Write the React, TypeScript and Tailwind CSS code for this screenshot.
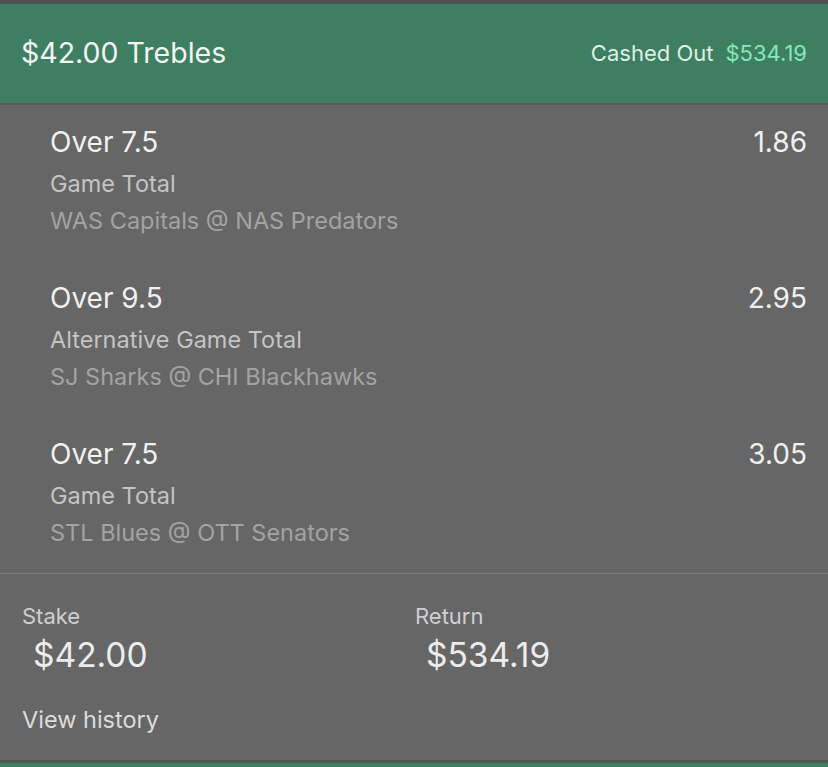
const legs = [
  { pick: "Over 7.5", odds: "1.86", market: "Game Total", event: "WAS Capitals @ NAS Predators" },
  { pick: "Over 9.5", odds: "2.95", market: "Alternative Game Total", event: "SJ Sharks @ CHI Blackhawks" },
  { pick: "Over 7.5", odds: "3.05", market: "Game Total", event: "STL Blues @ OTT Senators" },
];

export default function App() {
  return (
    <div className="flex h-[767px] w-[828px] flex-col overflow-hidden bg-[#666666] font-['Inter',sans-serif]">
      <div className="h-[4px] bg-[#4f4f4f]" />
      <div className="flex h-[99px] items-center justify-between bg-[#3d7f60] pl-[21px] pr-[21px]">
        <span className="text-[28.5px] text-[#f4f4f4]">$42.00 Trebles</span>
        <div className="flex items-center gap-[12px] text-[22px]">
          <span className="text-[#dfeee6]">Cashed Out</span>
          <span className="text-[#86e8b8]">$534.19</span>
        </div>
      </div>
      <div className="h-[2px] bg-[#5a5a5a]" />

      <div className="flex flex-col gap-[43px] pb-[24px] pt-[19px]">
        {legs.map((leg, i) => (
          <div key={i} className="flex flex-col pl-[50px] pr-[21px]">
            <div className="flex items-center justify-between text-[28px] leading-[36px] text-[#f0f0f0]">
              <span>{leg.pick}</span>
              <span>{leg.odds}</span>
            </div>
            <div className="mt-[8px] text-[23.5px] leading-[32px] text-[#c4c4c4]">{leg.market}</div>
            <div className="mt-[5px] text-[23.5px] leading-[32px] text-[#a3a3a3]">{leg.event}</div>
          </div>
        ))}
      </div>

      <div className="h-[1px] bg-[#7a7a7a]" />

      <div className="flex flex-1 flex-col pl-[22px] pt-[29px]">
        <div className="grid grid-cols-[393px_1fr]">
          <div className="flex flex-col">
            <span className="text-[22px] leading-[26px] text-[#cfcfcf]">Stake</span>
            <span className="ml-[11px] mt-[6px] text-[33.5px] leading-[40px] text-[#ececec]">$42.00</span>
          </div>
          <div className="flex flex-col">
            <span className="text-[22px] leading-[26px] text-[#cfcfcf]">Return</span>
            <span className="ml-[11px] mt-[6px] text-[33.5px] leading-[40px] text-[#ececec]">$534.19</span>
          </div>
        </div>
        <span className="mt-[30px] text-[23.5px] leading-[30px] text-[#dcdcdc]">View history</span>
      </div>

      <div className="h-[3px] bg-[#555555]" />
      <div className="h-[4px] bg-[#3d7f60]" />
    </div>
  );
}
